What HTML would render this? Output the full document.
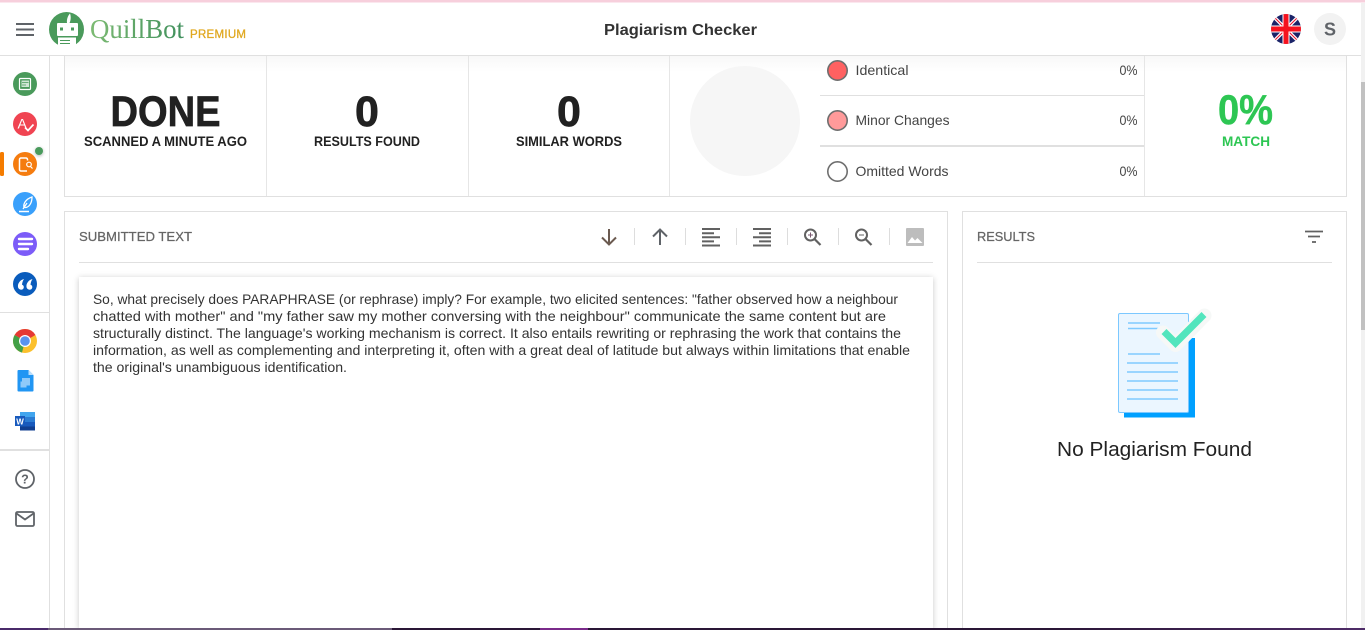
<!DOCTYPE html>
<html><head><meta charset="utf-8"><title>Plagiarism Checker</title>
<style>
html,body{margin:0;padding:0;width:1365px;height:630px;overflow:hidden;background:#fff}
#p{position:absolute;left:79px;top:277px;width:854px;height:351px;background:#fff;box-shadow:0 1px 6px rgba(0,0,0,.22)}
svg{position:absolute;left:0;top:0}
text{font-family:"Liberation Sans",sans-serif}
</style></head><body>
<div style="position:absolute;left:65px;top:56px;width:1281px;height:16px;background:linear-gradient(#f8f8f8,#fff)"></div>
<div id="p"></div>
<svg width="1365" height="630" viewBox="0 0 1365 630" xmlns="http://www.w3.org/2000/svg">
<defs><linearGradient id="q" x1="0" x2="1" y1="0" y2="0"><stop offset="0" stop-color="#7dbb73"/><stop offset="1" stop-color="#3f8f5c"/></linearGradient>
<linearGradient id="b" x1="0" x2="1" y1="0" y2="0"><stop offset="0" stop-color="#2a1636"/><stop offset="1" stop-color="#4f2c68"/></linearGradient>
<clipPath id="fc"><circle cx="1286" cy="29" r="15"/></clipPath>
<filter id="ds" x="-50%" y="-50%" width="200%" height="200%"><feDropShadow dx="0" dy="1" stdDeviation="1.5" flood-opacity=".3"/></filter></defs>

<!-- top -->
<rect x="0" y="0" width="1365" height="2.500" fill="#f7cfdc"/>
<rect x="0" y="55" width="1361" height="1" fill="#e0e0e0"/>
<rect x="1361" y="3" width="4" height="625" fill="#f1f1f1"/>
<rect x="1361" y="82" width="4" height="248" fill="#c1c1c1"/>
<path d="M16 24h18M16 29.500h18M16 35h18" stroke="#5f6368" stroke-width="2"/>

<!-- logo -->
<circle cx="66.500" cy="29.500" r="17.500" fill="#4a9a5b"/>
<path d="M67 23c-.5-3 .5-7 3-9.500 1 2.500 1 6.500-.5 9.500z" fill="#fff"/>
<rect x="57" y="23" width="21" height="13" rx="1" fill="#fff"/>
<rect x="60" y="27.500" width="3" height="3" fill="#4a9a5b"/><rect x="71" y="27.500" width="3" height="3" fill="#4a9a5b"/>
<path d="M58 37.500h18v8a17 17 0 0 1-18 0z" fill="#fff"/>
<path d="M60 40.500h10M60 43.500h10" stroke="#4a9a5b" stroke-width="1"/>
<text x="90" y="38" font-size="27" textLength="94" lengthAdjust="spacingAndGlyphs" fill="url(#q)" style="font-family:'Liberation Serif',serif">QuillBot</text>
<text x="190" y="38" font-size="11.500" textLength="56" stroke="#e0a820" stroke-width=".3" fill="#e0a820">PREMIUM</text>
<text x="604" y="35" font-size="16" font-weight="bold" textLength="153" lengthAdjust="spacingAndGlyphs" fill="#333">Plagiarism Checker</text>

<!-- flag -->
<g clip-path="url(#fc)">
<rect x="1271" y="14" width="30" height="30" fill="#1a2368"/>
<path d="M1271 14l30 30M1301 14l-30 30" stroke="#fff" stroke-width="3.500"/>
<path d="M1271 14l30 30M1301 14l-30 30" stroke="#e8112d" stroke-width="1"/>
<path d="M1286 14v30M1271 29h30" stroke="#fff" stroke-width="7"/>
<path d="M1286 14v30M1271 29h30" stroke="#f5121f" stroke-width="5"/>
</g>
<circle cx="1330" cy="29" r="16" fill="#f2f2f2"/>
<text x="1330" y="35.500" font-size="18" font-weight="bold" text-anchor="middle" fill="#5f6368">S</text>

<!-- sidebar -->
<rect x="49" y="56" width="1" height="574" fill="#e0e0e0"/>
<rect x="0" y="312" width="49" height="1" fill="#e0e0e0"/>
<rect x="0" y="449" width="49" height="2" fill="#e0e0e0"/>
<rect x="0" y="152" width="4" height="24" rx="1.500" fill="#f57c00"/>

<circle cx="25" cy="84" r="12" fill="#4a9a5b"/>
<rect x="19.500" y="78.500" width="11" height="11" rx="1" fill="none" stroke="#fff" stroke-width="1.200"/>
<rect x="21.500" y="80.500" width="7.500" height="6.500" fill="#cfe6d4"/>
<path d="M22 82.500h6.500M22 85h4" stroke="#4a9a5b" stroke-width=".8"/>

<circle cx="25" cy="124" r="12" fill="#f04452"/>
<text x="17.500" y="128.500" font-size="14" fill="#fff">A</text>
<path d="M25 127.500l3 3 5.500-6" fill="none" stroke="#fff" stroke-width="1.700"/>

<circle cx="25" cy="164" r="12" fill="#f57c0f"/>
<path d="M27.500 160.500v-1a1.500 1.500 0 0 0-1.500-1.500h-5a1.500 1.500 0 0 0-1.500 1.500v10a1.500 1.500 0 0 0 1.500 1.500h6" fill="none" stroke="#fff" stroke-width="1.500"/>
<circle cx="29" cy="164.500" r="2.300" fill="none" stroke="#fff" stroke-width="1.200"/>
<path d="M30.500 166.500l2 2" stroke="#fff" stroke-width="1.200"/>
<circle cx="39" cy="151" r="4" fill="#4a9a5b" filter="url(#ds)"/>

<circle cx="25" cy="204" r="12" fill="#3aa0fb"/>
<path d="M24 207.500c-1-4 2-8.500 8-10.500 0 5-2 9.500-6 10.500zM27 203l-4 6" fill="none" stroke="#fff" stroke-width="1.300"/>
<path d="M19 211.500h10" stroke="#fff" stroke-width="1.500"/>

<circle cx="25" cy="244" r="12" fill="#7c5cf8"/>
<path d="M19 239h13M19 244h13M19 249h9" stroke="#fff" stroke-width="2.400" stroke-linecap="round"/>

<circle cx="25" cy="284" r="12" fill="#0a5cbc"/>
<path d="M24 279c-4 1-6.500 4.500-6 8 .4 2.500 3.500 3.500 5 2 1.500-1.500.8-4-1-4.300.2-2 .8-4 2-5.700z" fill="#fff"/>
<path d="M32.500 279c-4 1-6.500 4.500-6 8 .4 2.500 3.500 3.500 5 2 1.500-1.500.8-4-1-4.300.2-2 .8-4 2-5.700z" fill="#fff"/>

<!-- chrome -->
<circle cx="25" cy="341" r="12" fill="#fbc02d"/>
<path d="M25 341L14.600 335A12 12 0 0 1 35.400 335z" fill="#e53935"/>
<path d="M25 341L14.600 335A12 12 0 0 0 22 352.600z" fill="#43a047"/>
<circle cx="25" cy="341" r="6" fill="#fff"/><circle cx="25" cy="341" r="4.800" fill="#5a93ee"/>

<!-- docs -->
<path d="M18.500 370h10l5 5v15.500a1 1 0 0 1-1 1h-14a1 1 0 0 1-1-1v-19.500a1 1 0 0 1 1-1z" fill="#2196f3"/>
<path d="M28.500 370v5h5z" fill="#bbdefb"/>
<rect x="22" y="378" width="8" height="7.500" fill="#90caf9"/><rect x="20.500" y="381.500" width="6" height="6" fill="#90caf9"/>

<!-- word -->
<rect x="20" y="412" width="15" height="5" fill="#41a5ee"/>
<rect x="20" y="417" width="15" height="5" fill="#2b7cd3"/>
<rect x="20" y="422" width="15" height="4.500" fill="#185abd"/>
<rect x="20" y="426.500" width="15" height="4" fill="#103f91"/>
<rect x="15" y="416" width="10" height="10" fill="#185abd"/>
<text x="20" y="424.500" font-size="8" font-weight="bold" text-anchor="middle" fill="#fff">W</text>

<circle cx="25" cy="479" r="9" fill="none" stroke="#5f6368" stroke-width="1.800"/>
<text x="25" y="483.500" font-size="12.500" font-weight="bold" text-anchor="middle" fill="#5f6368">?</text>
<rect x="16" y="512" width="18" height="14" rx="1.500" fill="none" stroke="#5f6368" stroke-width="1.800"/>
<path d="M16.500 513.500L25 519.500l8.500-6" fill="none" stroke="#5f6368" stroke-width="1.800"/>

<!-- stats card -->
<path d="M64.500 56V196.500H1346.500V56" fill="none" stroke="#e0e0e0"/>
<path d="M266.500 56v140M468.500 56v140M669.500 56v140M1144.500 56v140" stroke="#e6e6e6"/>
<g stroke="#212121" stroke-width=".7">
<text x="110.500" y="126" font-size="43" font-weight="bold" textLength="110" lengthAdjust="spacingAndGlyphs" fill="#212121">DONE</text>
<text x="367" y="126" font-size="43" font-weight="bold" text-anchor="middle" fill="#212121">0</text>
<text x="569" y="126" font-size="43" font-weight="bold" text-anchor="middle" fill="#212121">0</text>
</g>
<text x="84" y="146" font-size="14" font-weight="bold" textLength="163" lengthAdjust="spacingAndGlyphs" fill="#212121">SCANNED A MINUTE AGO</text>
<text x="314" y="146" font-size="14" font-weight="bold" textLength="106" lengthAdjust="spacingAndGlyphs" fill="#212121">RESULTS FOUND</text>
<text x="516" y="146" font-size="14" font-weight="bold" textLength="106" lengthAdjust="spacingAndGlyphs" fill="#212121">SIMILAR WORDS</text>
<circle cx="745" cy="121" r="55" fill="#f6f6f6"/>
<circle cx="837.500" cy="70.500" r="9.700" fill="#ff6161" stroke="#6e6e6e" stroke-width="1.600"/>
<circle cx="837.500" cy="120.500" r="9.700" fill="#ff9a9a" stroke="#6e6e6e" stroke-width="1.600"/>
<circle cx="837.500" cy="171.500" r="9.700" fill="#fff" stroke="#6e6e6e" stroke-width="1.600"/>
<text x="855.500" y="75" font-size="14" textLength="53" lengthAdjust="spacingAndGlyphs" fill="#444">Identical</text>
<text x="855.500" y="125" font-size="14" textLength="94" lengthAdjust="spacingAndGlyphs" fill="#444">Minor Changes</text>
<text x="855.500" y="176" font-size="14" textLength="93" lengthAdjust="spacingAndGlyphs" fill="#444">Omitted Words</text>
<text x="1119.500" y="75" font-size="14" textLength="18" lengthAdjust="spacingAndGlyphs" fill="#444">0%</text>
<text x="1119.500" y="125" font-size="14" textLength="18" lengthAdjust="spacingAndGlyphs" fill="#444">0%</text>
<text x="1119.500" y="176" font-size="14" textLength="18" lengthAdjust="spacingAndGlyphs" fill="#444">0%</text>
<rect x="820" y="95" width="324" height="1" fill="#e0e0e0"/>
<rect x="820" y="145" width="324" height="2" fill="#e0e0e0"/>
<text x="1218" y="124" font-size="42" font-weight="bold" textLength="55" lengthAdjust="spacingAndGlyphs" fill="#2dc653" stroke="#2dc653" stroke-width=".5">0%</text>
<text x="1222" y="146" font-size="14" font-weight="bold" textLength="48" lengthAdjust="spacingAndGlyphs" fill="#2dc653">MATCH</text>

<!-- cards -->
<path d="M64.500 630V211.500H947.500V630M962.500 630V211.500H1346.500V630" fill="none" stroke="#e0e0e0"/>
<rect x="79" y="262" width="854" height="1" fill="#e0e0e0"/>
<rect x="977" y="262" width="355" height="1" fill="#e0e0e0"/>
<text x="79" y="241" font-size="13" textLength="113" lengthAdjust="spacingAndGlyphs" fill="#666" stroke="#666" stroke-width=".25">SUBMITTED TEXT</text>
<text x="977" y="241" font-size="13" textLength="58" lengthAdjust="spacingAndGlyphs" fill="#666" stroke="#666" stroke-width=".25">RESULTS</text>

<!-- toolbar -->
<path d="M634.500 228v17M685.500 228v17M736.500 228v17M787.500 228v17M838.500 228v17M889.500 228v17" stroke="#ddd"/>
<path d="M609 229v15.500M602 237.500l7 7 7-7" fill="none" stroke="#6b5a50" stroke-width="2"/>
<path d="M660 245v-15.500M653 236.500l7-7 7 7" fill="none" stroke="#5f6368" stroke-width="2"/>
<path d="M702 229h18M702 233.200h12M702 237.300h18M702 241.400h12M702 245.500h18" stroke="#616161" stroke-width="2"/>
<path d="M753 229h18M759 233.200h12M753 237.300h18M759 241.400h12M753 245.500h18" stroke="#616161" stroke-width="2"/>
<circle cx="810.500" cy="235" r="5.500" fill="none" stroke="#616161" stroke-width="2"/>
<path d="M814.500 239l6 6" stroke="#616161" stroke-width="2.200"/>
<path d="M808 235h5M810.500 232.500v5" stroke="#7a5a70" stroke-width="1"/>
<circle cx="861.500" cy="235" r="5.500" fill="none" stroke="#616161" stroke-width="2"/>
<path d="M865.500 239l6 6" stroke="#616161" stroke-width="2.200"/>
<path d="M859 235h5" stroke="#616161" stroke-width="1"/>
<rect x="906" y="228" width="18" height="18" rx="1" fill="#bdbdbd"/>
<path d="M907.500 243l4.500-6 3 3.500 2.500-2.500 5 5z" fill="#fff"/>

<!-- filter -->
<path d="M1305 231.500h18M1308 236.500h12M1312 242h4" stroke="#616161" stroke-width="1.800"/>

<!-- paragraph -->
<g font-size="14" fill="#333">
<text x="93" y="304" textLength="805" lengthAdjust="spacingAndGlyphs">So, what precisely does PARAPHRASE (or rephrase) imply? For example, two elicited sentences: "father observed how a neighbour</text>
<text x="93" y="321" textLength="793" lengthAdjust="spacingAndGlyphs">chatted with mother" and "my father saw my mother conversing with the neighbour" communicate the same content but are</text>
<text x="93" y="338" textLength="808" lengthAdjust="spacingAndGlyphs">structurally distinct. The language's working mechanism is correct. It also entails rewriting or rephrasing the work that contains the</text>
<text x="93" y="355" textLength="817" lengthAdjust="spacingAndGlyphs">information, as well as complementing and interpreting it, often with a great deal of latitude but always within limitations that enable</text>
<text x="93" y="372" textLength="254" lengthAdjust="spacingAndGlyphs">the original's unambiguous identification.</text>
</g>

<!-- illustration -->
<path d="M1124 338h71v79.500h-71z" fill="#00a0ff"/>
<rect x="1118.500" y="313.500" width="70" height="99" rx="1.500" fill="#ebf6ff" stroke="#7cc8ff" stroke-width="1"/>
<path d="M1128 323h32M1128 328.500h32M1128 354h32M1127 363h51M1127 372h51M1127 381h51M1127 390h51M1127 399h51" stroke="#80caff" stroke-width="1.500"/>
<path d="M1163 332.500l12.500 12.500 29-29.500" fill="none" stroke="#f6f8f7" stroke-width="14" stroke-linecap="round" stroke-linejoin="round"/>
<path d="M1164 331.500l11.500 11.500 28.500-28.500" fill="none" stroke="#52e5bd" stroke-width="7"/>
<text x="1057" y="456" font-size="20" textLength="195" lengthAdjust="spacingAndGlyphs" fill="#222">No Plagiarism Found</text>

<!-- taskbar strip -->
<rect x="0" y="628" width="1365" height="2" fill="#2a1636"/>
<rect x="0" y="628" width="48" height="2" fill="#4a2a6a"/>
<rect x="48" y="628" width="344" height="2" fill="#6b5a78"/>
<rect x="540" y="628" width="48" height="2" fill="#7a2a8a"/>
<rect x="1050" y="628" width="315" height="2" fill="url(#b)"/>
</svg>
</body></html>
